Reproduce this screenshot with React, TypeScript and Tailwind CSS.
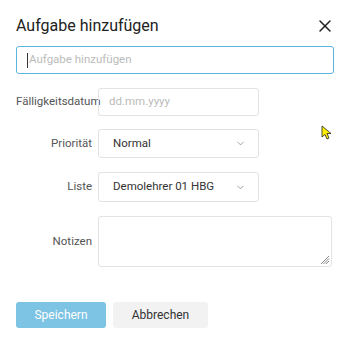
import { ChevronDown, X } from "lucide-react";

const labelCls = "w-[82px] shrink-0 pr-1.5 text-right text-[11.5px] text-[#555] whitespace-nowrap";

export default function App() {
  return (
    <div className="relative w-[350px] h-[340px] bg-white font-['Roboto',sans-serif] text-[#333]">
      {/* Header */}
      <div className="flex items-center justify-between pl-4 pr-[15px] pt-[15px]">
        <h1 className="text-[16px] leading-[22px] text-[#222]">Aufgabe hinzufügen</h1>
        <X size={20} strokeWidth={1.8} className="text-[#222]" />
      </div>

      {/* Title input */}
      <div className="px-4 mt-[9px]">
        <div className="flex h-[28px] items-center rounded-[3px] border border-[#5bb4dd] px-2.5 text-[11.5px] text-[#bbb]">
          <span className="mr-[1px] h-[15px] w-px bg-[#333]" />
          Aufgabe hinzufügen
        </div>
      </div>

      {/* Form rows */}
      <div className="mt-[14px] flex flex-col pl-4 pr-[18px]">
        <div className="flex items-center">
          <span className={labelCls}>Fälligkeitsdatum</span>
          <div className="flex h-[28px] w-[161px] items-center rounded-[3px] border border-[#e3e3e3] px-2.5 text-[11.5px] text-[#bbb]">
            dd.mm.yyyy
          </div>
        </div>

        <div className="mt-[13px] flex items-center">
          <span className={labelCls}>Priorität</span>
          <div className="flex h-[29px] w-[161px] items-center justify-between rounded-[3px] border border-[#e3e3e3] pl-[14px] pr-3 text-[11.5px] text-[#333]">
            Normal
            <ChevronDown size={11} strokeWidth={1.5} className="text-[#777]" />
          </div>
        </div>

        <div className="mt-[14px] flex items-center">
          <span className={labelCls}>Liste</span>
          <div className="flex h-[30px] w-[161px] items-center justify-between rounded-[3px] border border-[#e3e3e3] pl-[14px] pr-3 text-[11.5px] text-[#333]">
            Demolehrer 01 HBG
            <ChevronDown size={11} strokeWidth={1.5} className="text-[#777]" />
          </div>
        </div>

        <div className="mt-[14px] flex items-center">
          <span className={labelCls}>Notizen</span>
          <div className="relative h-[51px] flex-1 rounded-[3px] border border-[#e3e3e3]">
            <svg width="10" height="10" viewBox="0 0 10 10" className="absolute bottom-[1px] right-[1px]">
              <path d="M9 1 L1 9 M9 3.5 L3.5 9 M9 6 L6 9" stroke="#888" strokeWidth="1" />
            </svg>
          </div>
        </div>
      </div>

      {/* Buttons */}
      <div className="mt-[35px] flex gap-[7px] pl-4">
        <button className="h-[26px] w-[90px] rounded-[3px] bg-[#7dc3e3] text-[12px] text-white">
          Speichern
        </button>
        <button className="h-[26px] w-[95px] rounded-[3px] bg-[#f2f2f2] text-[12px] text-[#333]">
          Abbrechen
        </button>
      </div>

      {/* Mouse pointer */}
      <svg width="12" height="16" viewBox="0 0 12 16" className="absolute left-[321px] top-[125px]">
        <path d="M1 1 L1 12 L4 9.5 L6 14 L8 13 L6 8.5 L10 8.5 Z" fill="#ffee00" stroke="#222" strokeWidth="0.8" strokeLinejoin="round" />
      </svg>
    </div>
  );
}
